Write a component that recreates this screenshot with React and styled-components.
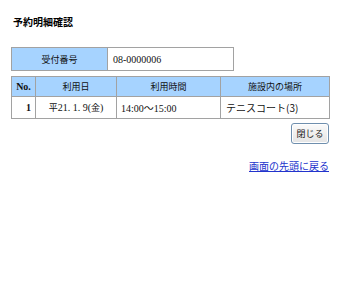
import React from "react";
import styled, { createGlobalStyle } from "styled-components";

const Global = createGlobalStyle`
  html, body { margin: 0; padding: 0; background: #ffffff; }
  body { font-family: "Liberation Serif", "Noto Sans CJK JP", serif; color: #000; }
`;

const Page = styled.div`
  width: 319px;
  padding: 15px 0 0 11px;
  display: flex;
  flex-direction: column;
`;

const Title = styled.h1`
  margin: 0 0 0 2px;
  font-family: "Noto Sans CJK JP", sans-serif;
  font-size: 10px;
  font-weight: bold;
  line-height: 14px;
`;

const Table = styled.table`
  border-collapse: collapse;
  width: ${(p) => p.$width}px;
  margin-top: ${(p) => p.$top}px;
  table-layout: fixed;
  border: 1px solid #8e8e8e;
`;

const Head = styled.th`
  background: #a6d3ff;
  border: 1px solid #a2a2a2;
  font-family: "Noto Sans CJK JP", sans-serif;
  font-size: 9px;
  font-weight: normal;
  text-align: center;
  height: ${(p) => p.$h}px;
  padding: 0;
  color: #111;
`;

const NoHead = styled(Head)`
  font-family: "Liberation Serif", serif;
  font-weight: bold;
  font-size: 10px;
`;

const Cell = styled.td`
  border: 1px solid #a2a2a2;
  font-size: 10px;
  height: ${(p) => p.$h}px;
  padding: 0 ${(p) => p.$pr || 4}px 0 ${(p) => p.$pl || 4}px;
  text-align: ${(p) => p.$align || "left"};
  font-weight: ${(p) => (p.$bold ? "bold" : "normal")};
  font-family: ${(p) =>
    p.$gothic
      ? '"Noto Sans CJK JP", sans-serif'
      : '"Liberation Serif", "Noto Sans CJK JP", serif'};
  color: #111;
  white-space: nowrap;
`;

const Gothic = styled.span`
  font-family: "Noto Sans CJK JP", sans-serif;
  font-size: 9px;
`;

const Actions = styled.div`
  display: flex;
  flex-direction: column;
  align-items: flex-end;
  padding-right: 1px;
`;

const CloseButton = styled.button`
  margin-top: 4px;
  width: 38px;
  height: 21px;
  padding: 0;
  border: 1px solid #6f8fae;
  border-radius: 3px;
  background: linear-gradient(#fbfbfb, #e4e4e4);
  font-family: "Noto Sans CJK JP", sans-serif;
  font-size: 9px;
  color: #222;
  box-shadow: inset 0 0 0 1px #ffffff;
`;

const TopLink = styled.a`
  margin-top: 15px;
  font-family: "Noto Sans CJK JP", sans-serif;
  font-size: 10px;
  line-height: 14px;
  color: #2233cc;
  text-decoration: underline;
`;

export default function App() {
  return (
    <>
      <Global />
      <Page>
        <Title>予約明細確認</Title>
        <Table $width={223} $top={18}>
          <colgroup>
            <col style={{ width: 96 }} />
            <col />
          </colgroup>
          <tbody>
            <tr>
              <Head $h={22}>受付番号</Head>
              <Cell $h={22} $pl={5}>08-0000006</Cell>
            </tr>
          </tbody>
        </Table>
        <Table $width={319} $top={5}>
          <colgroup>
            <col style={{ width: 24 }} />
            <col style={{ width: 81 }} />
            <col style={{ width: 104 }} />
            <col />
          </colgroup>
          <tbody>
            <tr>
              <NoHead $h={19}>No.</NoHead>
              <Head $h={19}>利用日</Head>
              <Head $h={19}>利用時間</Head>
              <Head $h={19}>施設内の場所</Head>
            </tr>
            <tr>
              <Cell $h={21} $align="right" $bold $pr={4}>1</Cell>
              <Cell $h={21} $align="center">
                <Gothic>平</Gothic>21. 1. 9(<Gothic>金</Gothic>)
              </Cell>
              <Cell $h={21} $pl={4}>14:00～15:00</Cell>
              <Cell $h={21} $pl={5} $gothic>テニスコート(3)</Cell>
            </tr>
          </tbody>
        </Table>
        <Actions>
          <CloseButton type="button">閉じる</CloseButton>
          <TopLink href="#top">画面の先頭に戻る</TopLink>
        </Actions>
      </Page>
    </>
  );
}
